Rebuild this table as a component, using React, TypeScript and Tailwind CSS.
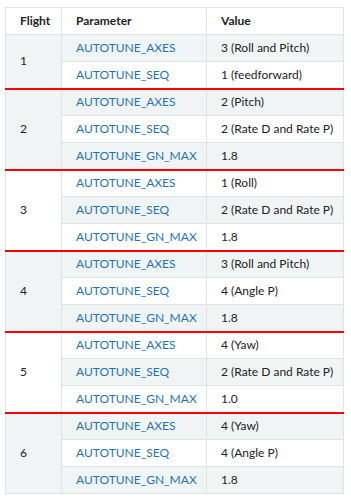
const groups: { flight: string; rows: [string, string][] }[] = [
  { flight: "1", rows: [["AUTOTUNE_AXES", "3 (Roll and Pitch)"], ["AUTOTUNE_SEQ", "1 (feedforward)"]] },
  { flight: "2", rows: [["AUTOTUNE_AXES", "2 (Pitch)"], ["AUTOTUNE_SEQ", "2 (Rate D and Rate P)"], ["AUTOTUNE_GN_MAX", "1.8"]] },
  { flight: "3", rows: [["AUTOTUNE_AXES", "1 (Roll)"], ["AUTOTUNE_SEQ", "2 (Rate D and Rate P)"], ["AUTOTUNE_GN_MAX", "1.8"]] },
  { flight: "4", rows: [["AUTOTUNE_AXES", "3 (Roll and Pitch)"], ["AUTOTUNE_SEQ", "4 (Angle P)"], ["AUTOTUNE_GN_MAX", "1.8"]] },
  { flight: "5", rows: [["AUTOTUNE_AXES", "4 (Yaw)"], ["AUTOTUNE_SEQ", "2 (Rate D and Rate P)"], ["AUTOTUNE_GN_MAX", "1.0"]] },
  { flight: "6", rows: [["AUTOTUNE_AXES", "4 (Yaw)"], ["AUTOTUNE_SEQ", "4 (Angle P)"], ["AUTOTUNE_GN_MAX", "1.8"]] },
];

export default function App() {
  let idx = 0;
  return (
    <div className="min-h-screen bg-white pt-[7px] pl-[5px] font-['Lato',sans-serif] text-[12px] text-[#222]">
      <table className="w-[339px] table-fixed border-collapse border border-[#e0e3e4]">
        <colgroup>
          <col className="w-[56px]" />
          <col className="w-[145px]" />
          <col />
        </colgroup>
        <thead>
          <tr className="h-[27px]">
            <th className="border border-[#e0e3e4] pl-[14px] text-left font-bold">Flight</th>
            <th className="border border-[#e0e3e4] pl-[14px] text-left font-bold">Parameter</th>
            <th className="border border-[#e0e3e4] pl-[14px] text-left font-bold">Value</th>
          </tr>
        </thead>
        <tbody>
          {groups.map((g, gi) =>
            g.rows.map(([param, value], ri) => {
              const stripe = idx++ % 2 === 0 ? "bg-[#f1f4f5]" : "bg-white";
              const last = ri === g.rows.length - 1 && gi < groups.length - 1;
              const bottom = last ? "border-b-2 border-b-[#f00]" : "";
              return (
                <tr key={gi + "-" + ri} className={`h-[27px] ${stripe}`}>
                  {ri === 0 && (
                    <td
                      rowSpan={g.rows.length}
                      className={`border border-[#e0e3e4] pl-[14px] align-middle ${gi < groups.length - 1 ? "border-b-2 border-b-[#f00]" : ""}`}
                    >
                      {g.flight}
                    </td>
                  )}
                  <td className={`border border-[#e0e3e4] pl-[14px] text-[#1f74b3] ${bottom}`}>{param}</td>
                  <td className={`border border-[#e0e3e4] pl-[14px] ${bottom}`}>{value}</td>
                </tr>
              );
            })
          )}
        </tbody>
      </table>
    </div>
  );
}
